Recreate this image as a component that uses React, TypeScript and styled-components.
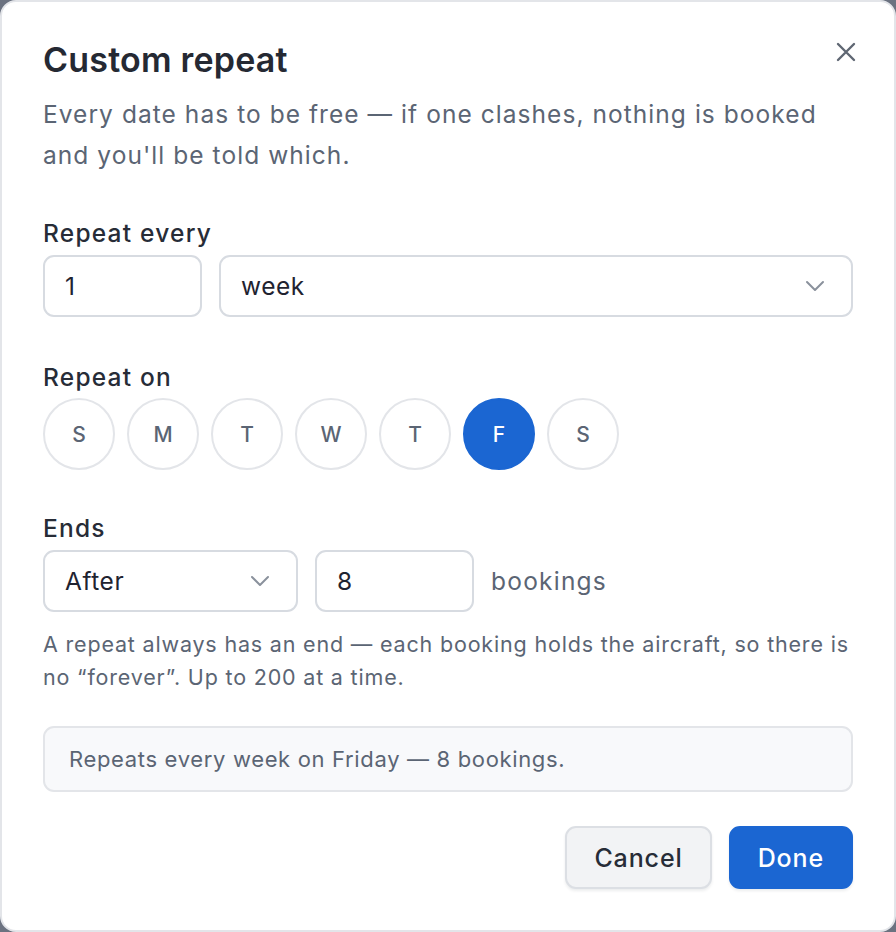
import React, { useState } from "react";
import styled, { createGlobalStyle } from "styled-components";

const GlobalStyle = createGlobalStyle`
    html, body {
        margin: 0;
        padding: 0;
        background: #6b7280;
    }
    body {
        font-family: Inter, "Noto Sans", "Liberation Sans", sans-serif;
        letter-spacing: 0.035em;
        -webkit-font-smoothing: antialiased;
    }
    * {
        box-sizing: border-box;
    }
`;

const DAYS = ["S", "M", "T", "W", "T", "F", "S"];
const DAY_NAMES = ["Sunday", "Monday", "Tuesday", "Wednesday", "Thursday", "Friday", "Saturday"];

const Dialog = styled.div`
    position: relative;
    width: 896px;
    height: 932px;
    background: #ffffff;
    border: 2px solid #e3e5e9;
    border-radius: 16px;
    padding: 35px 41px 39px;
    display: flex;
    flex-direction: column;
`;

const Title = styled.h2`
    margin: 0;
    font-size: 34px;
    line-height: 46px;
    font-weight: 600;
    color: #252933;
    letter-spacing: 0.2px;
`;

const CloseButton = styled.button`
    position: absolute;
    top: 34px;
    right: 32px;
    width: 32px;
    height: 32px;
    padding: 0;
    border: none;
    background: none;
    color: #5f6773;
    display: flex;
    align-items: center;
    justify-content: center;
    cursor: pointer;
`;

const Description = styled.p`
    margin: 11px 0 0;
    font-size: 24.5px;
    line-height: 41px;
    letter-spacing: 0.043em;
    color: #5b6574;
`;

const Section = styled.div<{ $gap?: number }>`
    margin-top: ${(p) => p.$gap ?? 40}px;
    display: flex;
    flex-direction: column;
`;

const Label = styled.div<{ $tight?: boolean }>`
    font-size: 24.5px;
    line-height: 34px;
    font-weight: 500;
    letter-spacing: 0.05em;
    color: #272c37;
    margin-bottom: ${(p) => (p.$tight ? 4 : 5)}px;
`;

const Row = styled.div`
    display: flex;
    align-items: center;
    gap: 17px;
`;

const Field = styled.div<{ $width?: number }>`
    position: relative;
    height: 62px;
    width: ${(p) => (p.$width ? `${p.$width}px` : "auto")};
    flex: ${(p) => (p.$width ? "none" : "1")};
    border: 2px solid #d7dbe1;
    border-radius: 11px;
    background: #ffffff;
    display: flex;
    align-items: center;
    padding: 0 20px;
    font-size: 24.5px;
    color: #1f2330;
`;

const Chevron = styled.svg`
    position: absolute;
    right: 26px;
    top: 50%;
    transform: translateY(-50%);
    color: #8a919c;
`;

const Suffix = styled.span`
    font-size: 24.5px;
    letter-spacing: 0.05em;
    color: #5b6574;
`;

const Days = styled.div`
    display: flex;
    gap: 12px;
`;

const DayButton = styled.button<{ $active?: boolean }>`
    width: 72px;
    height: 72px;
    border-radius: 50%;
    border: 2px solid ${(p) => (p.$active ? "#1b66d2" : "#e3e5e9")};
    background: ${(p) => (p.$active ? "#1b66d2" : "#ffffff")};
    color: ${(p) => (p.$active ? "#ffffff" : "#5b6574")};
    font-family: inherit;
    font-size: 21px;
    font-weight: 500;
    padding: 0;
    cursor: pointer;
`;

const Help = styled.p`
    margin: 16px 0 0;
    font-size: 21.5px;
    line-height: 33px;
    letter-spacing: 0.038em;
    color: #5b6574;
`;

const Summary = styled.div`
    margin-top: 32px;
    height: 66px;
    border: 2px solid #e3e5e9;
    border-radius: 11px;
    background: #f8f9fb;
    display: flex;
    align-items: center;
    padding: 0 24px;
    font-size: 22px;
    letter-spacing: 0.03em;
    color: #5b6574;
`;

const Footer = styled.div`
    margin-top: 34px;
    display: flex;
    justify-content: flex-end;
    gap: 17px;
`;

const Button = styled.button<{ $primary?: boolean }>`
    height: 63px;
    padding: 0 27px;
    border-radius: 11px;
    font-family: inherit;
    font-size: 25px;
    font-weight: 500;
    letter-spacing: 0.035em;
    cursor: pointer;
    border: 2px solid ${(p) => (p.$primary ? "#1b66d2" : "#dcdfe4")};
    background: ${(p) => (p.$primary ? "#1b66d2" : "#f2f3f5")};
    color: ${(p) => (p.$primary ? "#ffffff" : "#272c37")};
    box-shadow: 0 2px 3px rgba(16, 24, 40, 0.08);
`;

const ChevronIcon = () => (
    <Chevron width="20" height="12" viewBox="0 0 20 12" fill="none">
        <path d="M2 2l8 8 8-8" stroke="currentColor" strokeWidth="2" strokeLinecap="round" strokeLinejoin="round" />
    </Chevron>
);

export default function App() {
    const [selected, setSelected] = useState<number[]>([5]);

    const toggleDay = (idx: number) => {
        setSelected(
            selected.includes(idx) ? selected.filter((d) => d !== idx) : [...selected, idx]
        );
    };

    const dayText = selected
        .slice()
        .sort()
        .map((d) => DAY_NAMES[d])
        .join(", ");

    return (
        <>
            <GlobalStyle />
            <Dialog>
                <Title>Custom repeat</Title>
                <CloseButton aria-label="Close">
                    <svg width="22" height="22" viewBox="0 0 22 22" fill="none">
                        <path d="M3 3l16 16M19 3L3 19" stroke="currentColor" strokeWidth="2.4" strokeLinecap="round" />
                    </svg>
                </CloseButton>
                <Description>
                    Every date has to be free — if one clashes, nothing is booked and you'll be told
                    which.
                </Description>

                <Section>
                    <Label>Repeat every</Label>
                    <Row>
                        <Field $width={159}>1</Field>
                        <Field>
                            week
                            <ChevronIcon />
                        </Field>
                    </Row>
                </Section>

                <Section $gap={43}>
                    <Label $tight>Repeat on</Label>
                    <Days>
                        {DAYS.map((day, idx) => (
                            <DayButton
                                key={idx}
                                $active={selected.includes(idx)}
                                onClick={() => toggleDay(idx)}
                            >
                                {day}
                            </DayButton>
                        ))}
                    </Days>
                </Section>

                <Section $gap={41}>
                    <Label>Ends</Label>
                    <Row>
                        <Field $width={255}>
                            After
                            <ChevronIcon />
                        </Field>
                        <Field $width={159}>8</Field>
                        <Suffix>bookings</Suffix>
                    </Row>
                </Section>

                <Help>
                    A repeat always has an end — each booking holds the aircraft, so there is no
                    “forever”. Up to 200 at a time.
                </Help>

                <Summary>Repeats every week on {dayText} — 8 bookings.</Summary>

                <Footer>
                    <Button>Cancel</Button>
                    <Button $primary>Done</Button>
                </Footer>
            </Dialog>
        </>
    );
}
